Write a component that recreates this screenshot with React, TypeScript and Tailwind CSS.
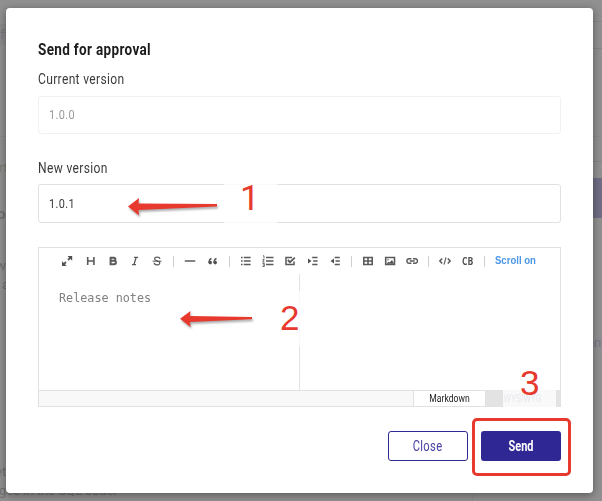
import type { ReactNode } from 'react';

const narrow = "inline-block whitespace-nowrap font-['Roboto',sans-serif]";

function Icon({ children }: { children: ReactNode }) {
  return (
    <svg width="12" height="12" viewBox="0 0 12 12" className="shrink-0" fill="none" stroke="#5a5a5a" strokeWidth="1.5">
      {children}
    </svg>
  );
}

function Sep({ className }: { className: string }) {
  return <span className={`h-[11px] w-px shrink-0 bg-[#cfcfcf] ${className}`} />;
}

function Toolbar() {
  return (
    <div className="flex h-[26px] items-center pl-[22px] font-['Liberation_Sans',sans-serif]">
      <Icon>
        <path d="M7 5 9.5 2.5M5 7 2.5 9.5" strokeWidth="1.8" />
        <path d="M6.5 1H11.2V5.7ZM1 6.3V11H5.7Z" fill="#505050" stroke="none" />
      </Icon>
      <span className="ml-[12px]"><Icon><path d="M2.7 2v8M8.9 2v8M2.7 6h6.2" strokeWidth="1.6" /></Icon></span>
      <span className="ml-[10px]"><Icon><path d="M3.6 2.7h3.2a1.5 1.5 0 0 1 0 3.1H3.6zM3.6 5.8h3.6a1.6 1.6 0 0 1 0 3.4h-3.6z" strokeWidth="2" /></Icon></span>
      <span className="ml-[10px]"><Icon><path d="M5 2.3h4M3 9.7h4M7.2 2.3 4.9 9.7" strokeWidth="1.3" /></Icon></span>
      <span className="ml-[10px]"><Icon><path d="M8.9 4C8.6 1.3 3.5 1.6 3.6 4c.1 2.4 5.2 1.5 5.2 4 0 2.5-5.5 2.5-5.6-.2" strokeWidth="1.2" /><path d="M1.6 6.2h9" strokeWidth="1" /></Icon></span>
      <Sep className="ml-[10px]" />
      <span className="ml-[10px]"><Icon><path d="M.8 6h10.4" /></Icon></span>
      <span className="ml-[11px]"><Icon><path d="M2 7.6C2 5 3 3.9 4.5 3.5M7 7.6C7 5 8 3.9 9.5 3.5" strokeWidth="1.3" /><circle cx="3.2" cy="7.6" r="1.8" fill="#505050" stroke="none" /><circle cx="8.2" cy="7.6" r="1.8" fill="#505050" stroke="none" /></Icon></span>
      <Sep className="ml-[10px]" />
      <span className="ml-[10px]"><Icon><path d="M1 2.5h1.6M1 6h1.6M1 9.5h1.6M3.8 2.5h6.8M3.8 6h6.8M3.8 9.5h6.8" strokeWidth="1.4" /></Icon></span>
      <span className="ml-[10px]"><Icon><path d="M4 2.5h7.5M4 6h7.5M4 9.5h7.5" strokeWidth="1.4" /><path d="M1 .8h1v2.6M.5 4.6h1.7L.7 7h1.8M.5 8.5h1.8v3H.5M.8 10h1.4" strokeWidth=".9" /></Icon></span>
      <span className="ml-[10px]"><Icon><path d="M10 6.5v3.1H2V2.4h6" strokeWidth="1.5" /><path d="m3.8 5 2.2 2.2 4.8-4.5" strokeWidth="1.8" /></Icon></span>
      <span className="ml-[11px]"><Icon><path d="M5.2 2.5h5.3M6.2 6h4.3M5.2 9.5h5.3" strokeWidth="1.4" /><path d="M1 3.5 4.5 6 1 8.5Z" fill="#505050" stroke="none" /></Icon></span>
      <span className="ml-[10px]"><Icon><path d="M5.7 2.5h5.1M6.5 6h4.3M5.7 9.5h5.1" strokeWidth="1.4" /><path d="M5 3.5 1.5 6 5 8.5Z" fill="#505050" stroke="none" /></Icon></span>
      <Sep className="ml-[10px]" />
      <span className="ml-[10px]"><Icon><path d="M1.8 2.5h8.4v7H1.8ZM6 2.5v7M1.8 6h8.4" strokeWidth="1.6" /></Icon></span>
      <span className="ml-[10px]"><Icon><path d="M1.7 2.5h8.8v7H1.7Z" strokeWidth="1.6" /><path d="m2.4 8.7 2-2 1.2.8L8 5l2 3.7Z" fill="#505050" stroke="none" /><circle cx="4" cy="4.7" r=".7" fill="#505050" stroke="none" /></Icon></span>
      <span className="ml-[10px]"><Icon><path d="M5.4 3.7H3.2a2.3 2.3 0 0 0 0 4.6h2.2M7 3.7H9.2a2.3 2.3 0 0 1 0 4.6H7M3.7 6h5" strokeWidth="1.4" /></Icon></span>
      <Sep className="ml-[10px]" />
      <span className="ml-[10px]"><Icon><path d="M3.2 3.4.8 6l2.4 2.6M8.8 3.4 11.2 6 8.8 8.6" /><path d="M7 2.4 5 9.6" strokeWidth="1.1" /></Icon></span>
      <span className="ml-[11px] inline-block w-[12px] origin-left scale-x-[.86] font-['Open_Sans',sans-serif] text-[10px] leading-3 font-bold text-[#505050]">CB</span>
      <Sep className="ml-[10px]" />
      <span className="ml-[10px] origin-left scale-x-[.91] whitespace-nowrap text-[10.5px] font-bold text-[#4b96e6]">Scroll on</span>
    </div>
  );
}

function Backdrop() {
  return (
    <div className="absolute inset-0 overflow-hidden bg-[#909090] font-['Roboto',sans-serif] text-[13px] leading-4 text-[#707070]">
      <div className="absolute top-[24px] left-0 h-[21px] w-8 bg-[#8b8b8b]" />
      <span className="absolute top-[27px] left-0 text-[#7b7783]">ft</span>
      <div className="absolute top-[136px] left-0 h-px w-full bg-[#8a8a8a]" />
      <span className="absolute top-[160px] -left-[8px] text-[#7d7871]">ert</span>
      <span className="absolute top-[206px] -left-[3px] text-[15px] font-bold">o</span>
      <span className="absolute top-[258px] -left-[4px]">w</span>
      <span className="absolute top-[277px] left-[2px]">a</span>
      <span className="absolute top-[464px] -left-[5px]">et</span>
      <span className="absolute top-[483px] -left-[1px] whitespace-nowrap">ges in the SQL coder</span>
      <div className="absolute top-[21px] right-0 h-px w-3 bg-[#858585]" />
      <div className="absolute top-[48px] right-0 h-px w-3 bg-[#858585]" />
      <div className="absolute top-[161px] right-0 h-px w-3 bg-[#858585]" />
      <div className="absolute top-[178px] right-0 h-[40px] w-3 bg-[#706e85]" />
      <span className="absolute top-[335px] left-[587px] text-[#77758a]">ent</span>
      <div className="absolute top-[493px] left-[472px] h-2 w-px bg-[#8a8a8a]" />
    </div>
  );
}

function Annotations() {
  return (
    <div className="pointer-events-none absolute inset-0 font-['Liberation_Sans',sans-serif] text-[34px] leading-[34px] text-[#e7392d]">
      <div className="absolute top-[180px] left-[224px] h-[46px] w-[53px] bg-white/80" />
      <div className="absolute top-[291px] left-[272px] h-[55px] w-[53px] bg-white/80" />
      <div className="absolute top-[360px] left-[503px] h-[47px] w-[53px] bg-white/80" />
      <span className="absolute top-[182px] left-[240px] font-['Roboto',sans-serif] text-[35px]">1</span>
      <div className="absolute top-[301px] left-[280px] w-[18px] overflow-hidden text-[35px]">2</div>
      <span className="absolute top-[366px] left-[520px] text-[35px]">3</span>
      <svg className="absolute inset-0" width="602" height="501" fill="#e7392d">
        <g style={{ filter: 'drop-shadow(1px 2px 1px #0005)' }}>
          <path d="M128 206.5 139 198 138.5 203.5 217 204V206.5L138.5 210 139 215.5Z" />
          <path d="M180 318.8 190.5 311 190 316 252 317V319.3L190 322 190.5 327Z" />
        </g>
      </svg>
      <div className="absolute top-[418px] left-[472px] h-[58px] w-[99px] rounded-[5px] border-3 border-[#e7392d]" />
    </div>
  );
}

export default function App() {
  return (
    <main className="relative h-[501px] w-[602px] overflow-hidden">
      <Backdrop />
      <section className="relative mt-2 ml-[6px] flex h-[485px] w-[587px] flex-col rounded-[4px] bg-white px-8 pt-[30px] text-[#3b3b3b] shadow-[0_2px_8px_#0006]">
        <h1 className="h-[22px] text-[16px] leading-[22px] font-bold text-[#1c1c1c]"><span className={`${narrow} origin-left scale-x-[.845] tracking-[.4px]`}>Send for approval</span></h1>
        <label className="mt-[9px] h-5 text-[14px] leading-5"><span className={`${narrow} origin-left scale-x-[.86] tracking-[.4px]`}>Current version</span></label>
        <div className="mt-[7px] flex h-[38px] items-center rounded-[3px] border border-[#f1f1f1] pl-[10px] text-[13px] text-[#999]"><span className={`${narrow} origin-left scale-x-[.84] tracking-[.4px]`}>1.0.0</span></div>
        <label className="mt-[24px] h-5 text-[14px] leading-5"><span className={`${narrow} origin-left scale-x-[.86] tracking-[.4px]`}>New version</span></label>
        <div className="mt-[6px] flex h-[39px] items-center rounded-[3px] border border-[#e1e1e1] pl-[10px] text-[13px]"><span className={`${narrow} origin-left scale-x-[.84] tracking-[.4px]`}>1.0.1</span></div>
        <div className="mt-[24px] flex h-[160px] flex-col border border-[#e1e1e1]">
          <Toolbar />
          <div className="flex flex-1">
            <div className="w-[261px] border-r border-[#e1e1e1] pt-[15px] pl-[20px] font-['DejaVu_Sans_Mono',monospace] text-[12px] leading-[18px] text-[#808080]"><span className="inline-block origin-left scale-x-[.98] whitespace-nowrap">Release notes</span></div>
          </div>
          <div className="flex h-[16px] justify-end border-t border-[#e1e1e1] bg-[#f8f8f8] text-[10px] leading-[14px]">
            <div className="w-[73px] border-x border-[#e1e1e1] bg-white text-center text-[#222]"><span className={`${narrow} scale-x-[.86]`}>Markdown</span></div>
            <div className="w-[74px] bg-[#e3e3e3] text-center text-[#8489a6]"><span className={`${narrow} scale-x-[.84]`}>WYSIWYG</span></div>
          </div>
        </div>
        <div className="mt-6 flex justify-end gap-[13px] text-[14px]">
          <button className="h-[30px] w-[80px] rounded-[3px] border border-[#2f2894] text-[#473ea2]"><span className={`${narrow} scale-x-[.8] tracking-[.4px]`}>Close</span></button>
          <button className="h-[30px] w-[80px] rounded-[3px] bg-[#2f2894] font-bold text-white"><span className={`${narrow} scale-x-[.78]`}>Send</span></button>
        </div>
      </section>
      <Annotations />
    </main>
  );
}
